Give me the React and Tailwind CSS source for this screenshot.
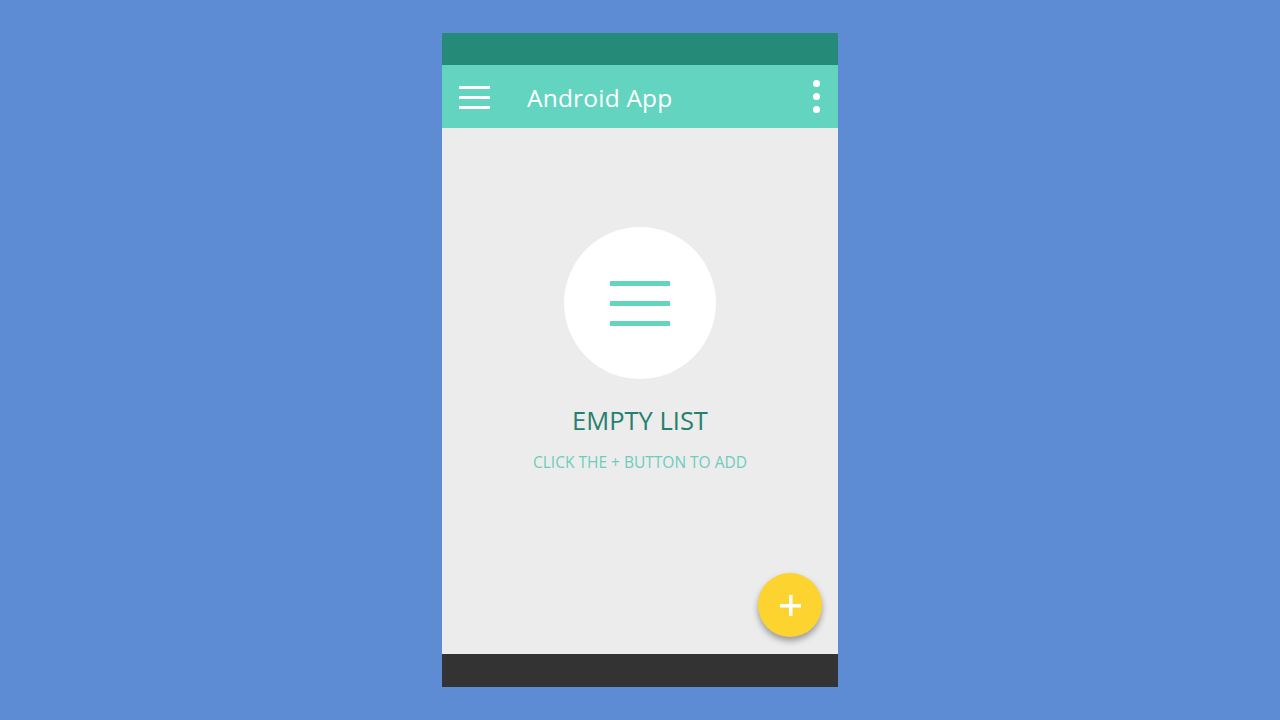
const font = { fontFamily: '"Open Sans", "Noto Sans", sans-serif' };

const App = () => {
  return (
    <div className="w-full h-screen bg-[#5e8cd4] flex items-center justify-center" style={font}>
      <div className="w-[396px] h-[654px] flex flex-col">
        <div className="h-[32px] bg-[#268a78]" />
        <div className="h-[63px] bg-[#62d4bf] flex items-center pl-[17px] pr-[18px]">
          <div className="w-[31px] flex flex-col gap-[7px] pt-[1px]">
            <span className="block h-[3px] bg-white" />
            <span className="block h-[3px] bg-white" />
            <span className="block h-[3px] bg-white" />
          </div>
          <span className="ml-[37px] text-[24.5px] text-white tracking-[0.2px] pt-[3px]">Android App</span>
          <div className="ml-auto flex flex-col gap-[6px]">
            <span className="block w-[7px] h-[7px] rounded-full bg-white" />
            <span className="block w-[7px] h-[7px] rounded-full bg-white" />
            <span className="block w-[7px] h-[7px] rounded-full bg-white" />
          </div>
        </div>
        <div className="relative flex-1 bg-[#ececec] flex flex-col items-center pt-[99px]">
          <div className="w-[152px] h-[152px] rounded-full bg-white flex flex-col items-center justify-center gap-[15px]">
            <span className="block w-[60px] h-[5px] bg-[#62d4bf]" />
            <span className="block w-[60px] h-[5px] bg-[#62d4bf]" />
            <span className="block w-[60px] h-[5px] bg-[#62d4bf]" />
          </div>
          <p className="mt-[25px] text-[25.5px] leading-[32px] text-[#26806e]">EMPTY LIST</p>
          <p className="mt-[15px] text-[15.5px] leading-[22px] text-[#6ccdbd]">CLICK THE + BUTTON TO ADD</p>
          <button className="absolute right-[16px] bottom-[17px] w-[64px] h-[64px] rounded-full bg-[#fdd42f] shadow-[0_4px_6px_rgba(0,0,0,0.35)] flex items-center justify-center">
            <svg width="21" height="21" viewBox="0 0 21 21">
              <rect x="9" y="0" width="3.5" height="21" fill="white" />
              <rect x="0" y="9" width="21" height="3.5" fill="white" />
            </svg>
          </button>
        </div>
        <div className="h-[33px] bg-[#333333]" />
      </div>
    </div>
  );
};

export default App;
